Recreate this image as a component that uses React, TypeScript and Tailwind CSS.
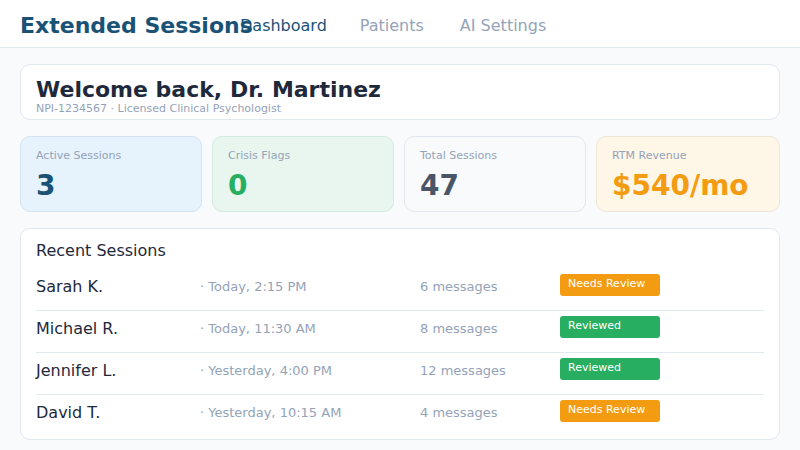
import React from "react";

const stats = [
  { label: "Active Sessions", value: "3", bg: "bg-[#e6f2fc]", border: "border-[#d3e3f1]", color: "text-[#1a5276]" },
  { label: "Crisis Flags", value: "0", bg: "bg-[#e8f6ef]", border: "border-[#d3ebde]", color: "text-[#27ae60]" },
  { label: "Total Sessions", value: "47", bg: "bg-[#f8fafc]", border: "border-[#e2e8f0]", color: "text-[#4a5568]" },
  { label: "RTM Revenue", value: "$540/mo", bg: "bg-[#fef6e7]", border: "border-[#eee6d6]", color: "text-[#f39c12]" },
];

const sessions = [
  { name: "Sarah K.", when: "· Today, 2:15 PM", msgs: "6 messages", status: "Needs Review" },
  { name: "Michael R.", when: "· Today, 11:30 AM", msgs: "8 messages", status: "Reviewed" },
  { name: "Jennifer L.", when: "· Yesterday, 4:00 PM", msgs: "12 messages", status: "Reviewed" },
  { name: "David T.", when: "· Yesterday, 10:15 AM", msgs: "4 messages", status: "Needs Review" },
];

export default function App() {
  return (
    <div className="min-h-screen bg-[#f8fafc] font-['DejaVu_Sans',sans-serif]">
      <header className="h-[48px] bg-white border-b border-[#e2e8f0] flex items-center px-5 pt-[5px]">
        <div className="w-[220px] flex-none whitespace-nowrap text-[22px] leading-[26px] font-bold text-[#1a5276]">
          Extended Sessions
        </div>
        <nav className="flex gap-8 text-[16px] leading-5">
          <span className="text-[#1a5276]">Dashboard</span>
          <span className="text-[#94a3b8] ml-[1px]">Patients</span>
          <span className="text-[#94a3b8] ml-[4px]">AI Settings</span>
        </nav>
      </header>
      <main className="px-5 pt-4 flex flex-col gap-4">
        <section className="bg-white border border-[#e2e8f0] rounded-[10px] px-[15px] pt-[13px] pb-[3px]">
          <h1 className="text-[22px] leading-[24px] font-bold text-[#1e293b]">Welcome back, Dr. Martinez</h1>
          <p className="text-[11px] leading-[14px] text-[#94a3b8]">NPI-1234567 · Licensed Clinical Psychologist</p>
        </section>
        <section className="grid grid-cols-[182px_182px_182px_1fr] gap-[10px]">
          {stats.map((s) => (
            <div key={s.label} className={`rounded-[10px] border ${s.bg} ${s.border} px-[15px] pt-3 pb-[9px]`}>
              <div className="text-[11px] leading-[14px] text-[#94a3b8]">{s.label}</div>
              <div className={`mt-[7px] text-[28px] leading-[32px] font-bold ${s.color}`}>{s.value}</div>
            </div>
          ))}
        </section>
        <section className="bg-white border border-[#e2e8f0] rounded-[10px] px-[15px] pt-3 pb-[3px]">
          <h2 className="text-[16px] leading-5 text-[#1e293b] mb-2">Recent Sessions</h2>
          <div>
            {sessions.map((s, i) => (
              <div
                key={s.name}
                className={`grid grid-cols-[164px_220px_140px_100px] items-start pt-[5px] pb-[12px] ${i > 0 ? "border-t border-[#e2e8f0]" : ""}`}
              >
                <span className="pt-[2px] text-[16px] leading-[22px] text-[#1e293b]">{s.name}</span>
                <span className="pt-[2px] text-[13px] leading-[22px] text-[#94a3b8]">{s.when}</span>
                <span className="pt-[2px] text-[13px] leading-[22px] text-[#94a3b8]">{s.msgs}</span>
                <span
                  className={`h-[22px] w-[100px] rounded-[3px] pl-2 text-[11px] leading-[20px] text-white ${
                    s.status === "Reviewed" ? "bg-[#27ae60]" : "bg-[#f39c12]"
                  }`}
                >
                  {s.status}
                </span>
              </div>
            ))}
          </div>
        </section>
      </main>
    </div>
  );
}
